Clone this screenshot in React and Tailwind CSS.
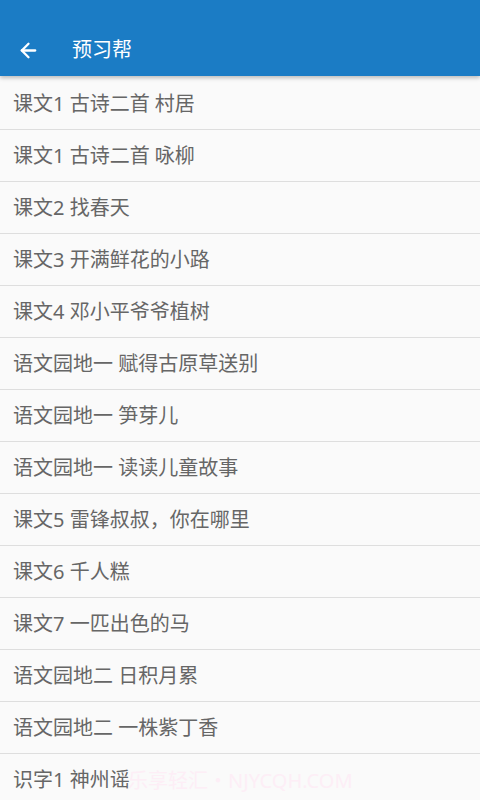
import { ArrowLeft } from "lucide-react";

const lessons = [
  "课文1 古诗二首 村居",
  "课文1 古诗二首 咏柳",
  "课文2 找春天",
  "课文3 开满鲜花的小路",
  "课文4 邓小平爷爷植树",
  "语文园地一 赋得古原草送别",
  "语文园地一 笋芽儿",
  "语文园地一 读读儿童故事",
  "课文5 雷锋叔叔，你在哪里",
  "课文6 千人糕",
  "课文7 一匹出色的马",
  "语文园地二 日积月累",
  "语文园地二 一株紫丁香",
  "识字1 神州谣",
];

export default function App() {
  return (
    <div
      className="relative h-[800px] w-[480px] overflow-hidden bg-[#fafafa]"
      style={{ fontFamily: '"Noto Sans", "Noto Sans CJK SC", sans-serif' }}
    >
      <header className="relative z-10 flex h-[76px] items-end bg-[#1b7cc5] pb-[14px] shadow-[0_2px_4px_rgba(0,0,0,0.25)]">
        <div className="flex h-[24px] items-center">
          <ArrowLeft className="ml-[17px] text-white" size={23} strokeWidth={2.4} />
          <span className="ml-[32px] text-[20px] leading-none text-white">预习帮</span>
        </div>
      </header>

      <ul className="pt-[2px]">
        {lessons.map((title) => (
          <li
            key={title}
            className="flex h-[52px] items-center border-b border-[#dedede] pl-[13px] text-[20px] text-[#666666]"
          >
            {title}
          </li>
        ))}
      </ul>

      <div className="pointer-events-none absolute left-[128px] top-[766px] text-[20px] text-[#fdeef6]">
        乐享轻汇・NJYCQH.COM
      </div>
    </div>
  );
}
